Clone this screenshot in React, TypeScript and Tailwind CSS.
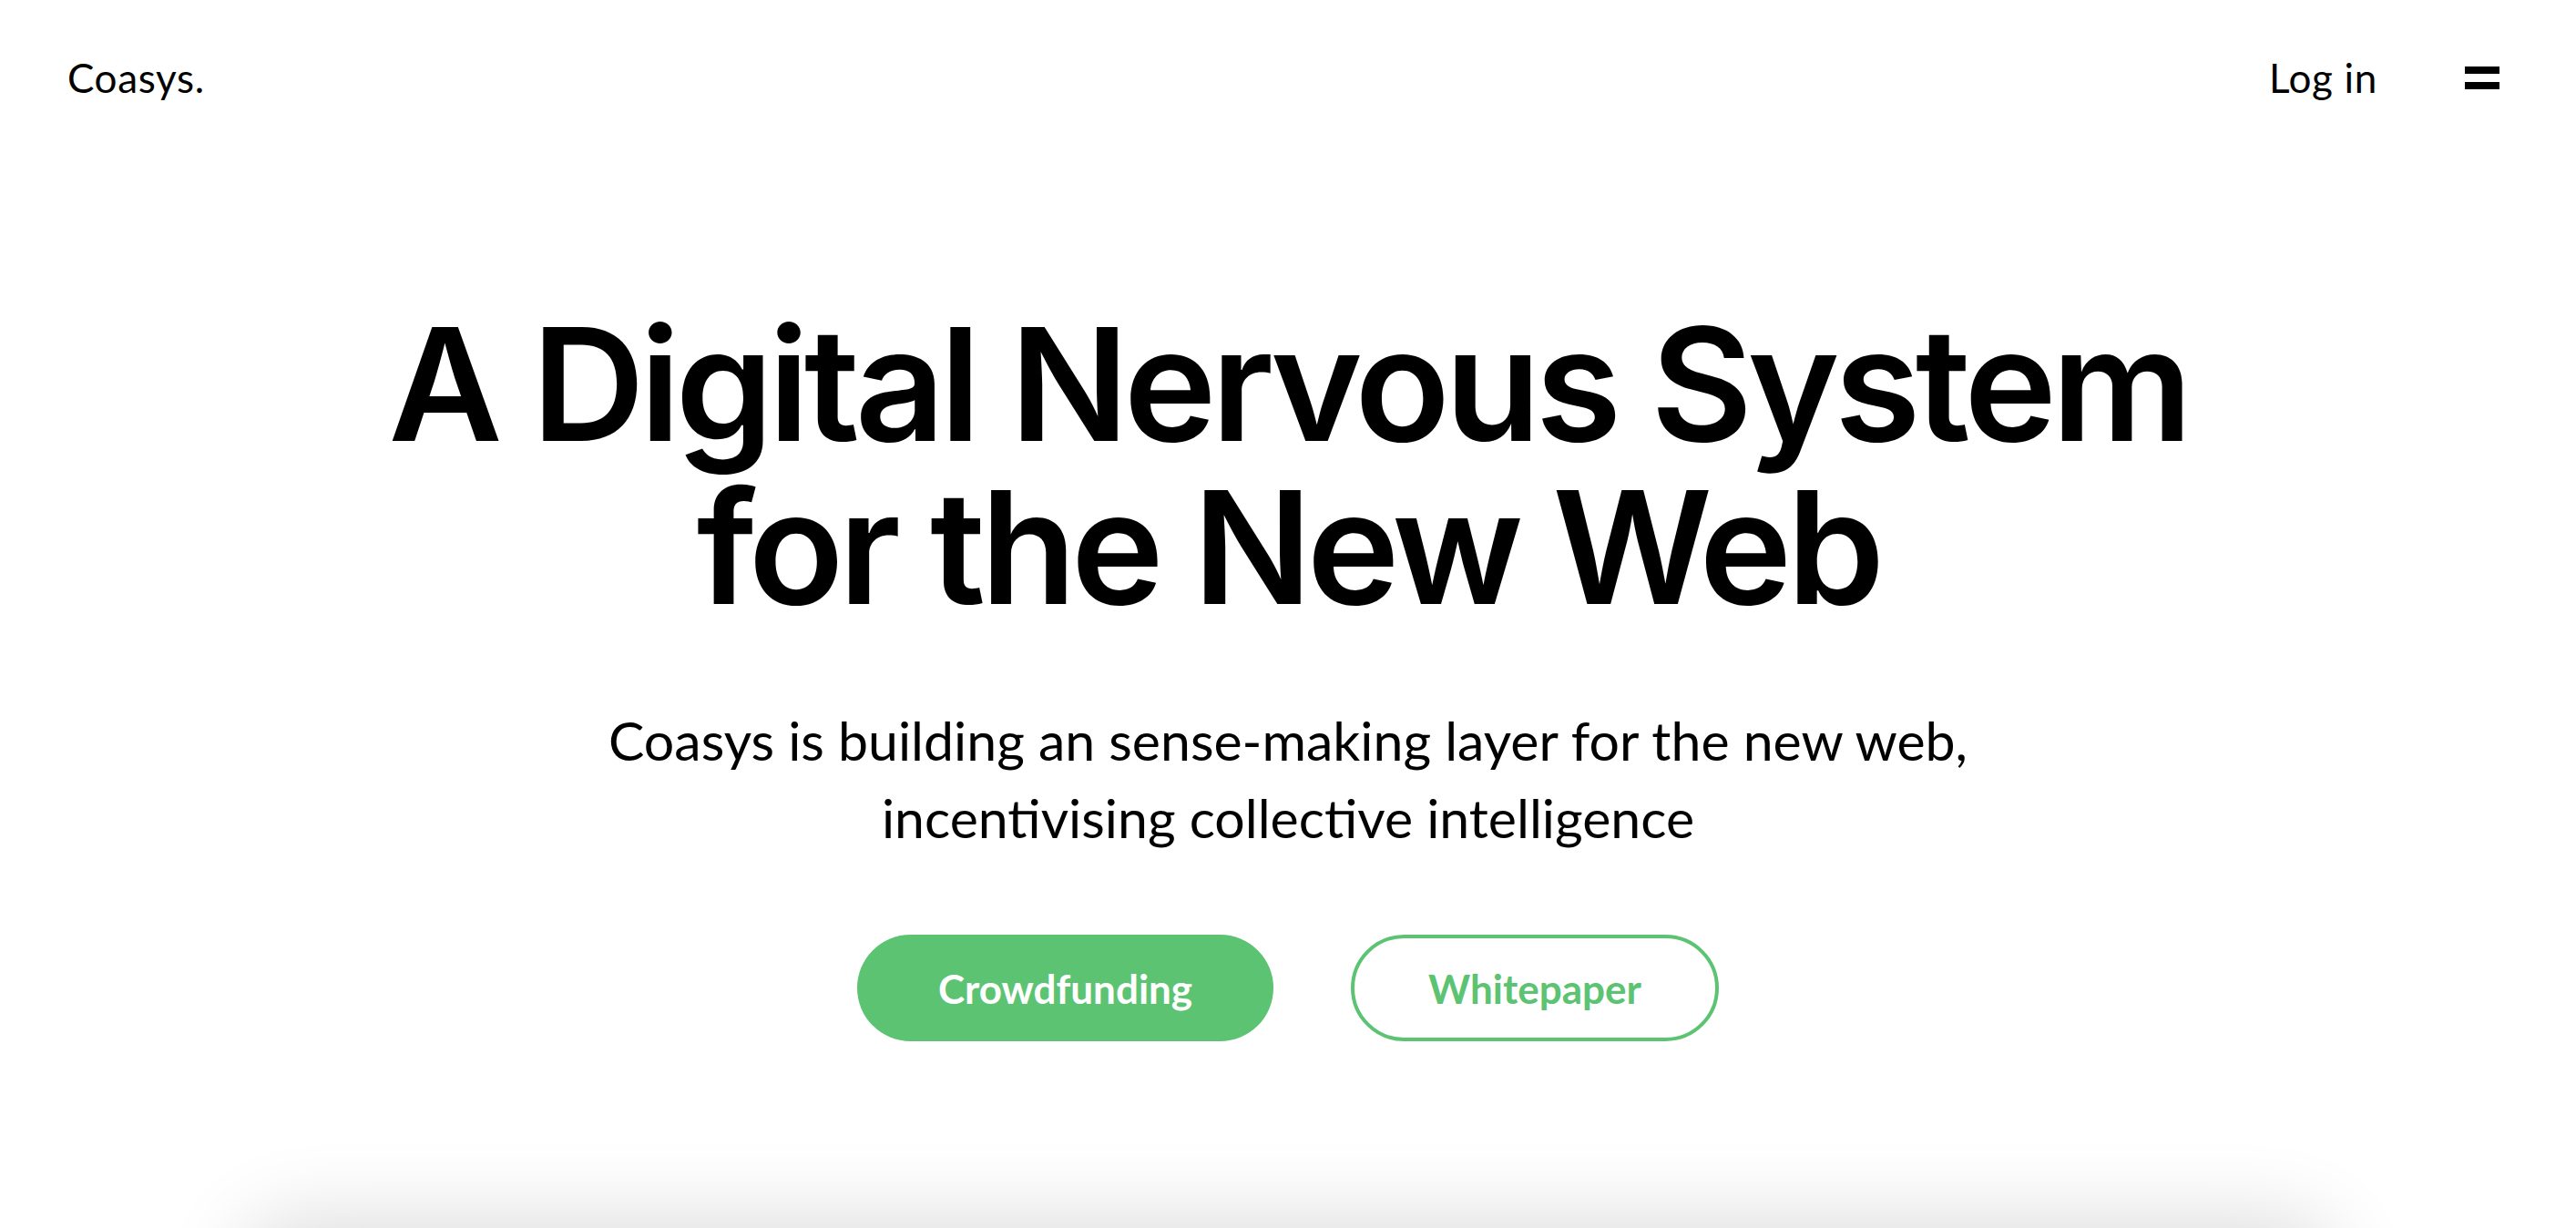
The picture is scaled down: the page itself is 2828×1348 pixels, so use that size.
export default function App() {
  return (
    <div className="min-h-screen bg-white text-black overflow-hidden" style={{ fontFamily: "Lato, 'Liberation Sans', sans-serif" }}>
      <Header />
      <Hero />
    </div>
  );
}

function Header() {
  return (
    <div className="flex items-center justify-between pl-[74px] pr-[84px] h-[170px]">
      <a href="#" className="text-[44px] tracking-[0.015em]">Coasys.</a>
      <div className="flex items-center gap-[96px]">
        <a href="#" className="text-[44px] tracking-[0.015em]">Log in</a>
        <div className="flex flex-col gap-[9px]">
          <span className="block w-[38px] h-[8px] bg-black" />
          <span className="block w-[38px] h-[8px] bg-black" />
        </div>
      </div>
    </div>
  );
}

function Hero() {
  return (
    <div className="flex flex-col items-center text-center">
      <h1
        className="mt-[162px] text-[172px] leading-[179px] font-semibold tracking-[-0.033em]"
        style={{ fontFamily: "Inter, sans-serif" }}
      >
        A Digital Nervous System
        <br />
        for the New Web
      </h1>
      <p className="mt-[80px] text-[59px] leading-[85px]">
        Coasys is building an sense-making layer for the new web,
        <br />
        incentivising collective intelligence
      </p>
      <div className="mt-[86px] flex gap-[85px]">
        <a href="#" className="flex items-center justify-center w-[457px] h-[117px] rounded-full bg-[#5cc372] text-white text-[44px] font-bold">
          Crowdfunding
        </a>
        <a href="#" className="flex items-center justify-center w-[404px] h-[117px] rounded-full border-[4px] border-[#5cc372] text-[#5cc372] text-[44px] font-bold">
          Whitepaper
        </a>
      </div>
      <div className="mt-[205px] w-[2300px] h-[400px] rounded-[60px] bg-white shadow-[0_-10px_90px_rgba(0,0,0,0.14)]" />
    </div>
  );
}
